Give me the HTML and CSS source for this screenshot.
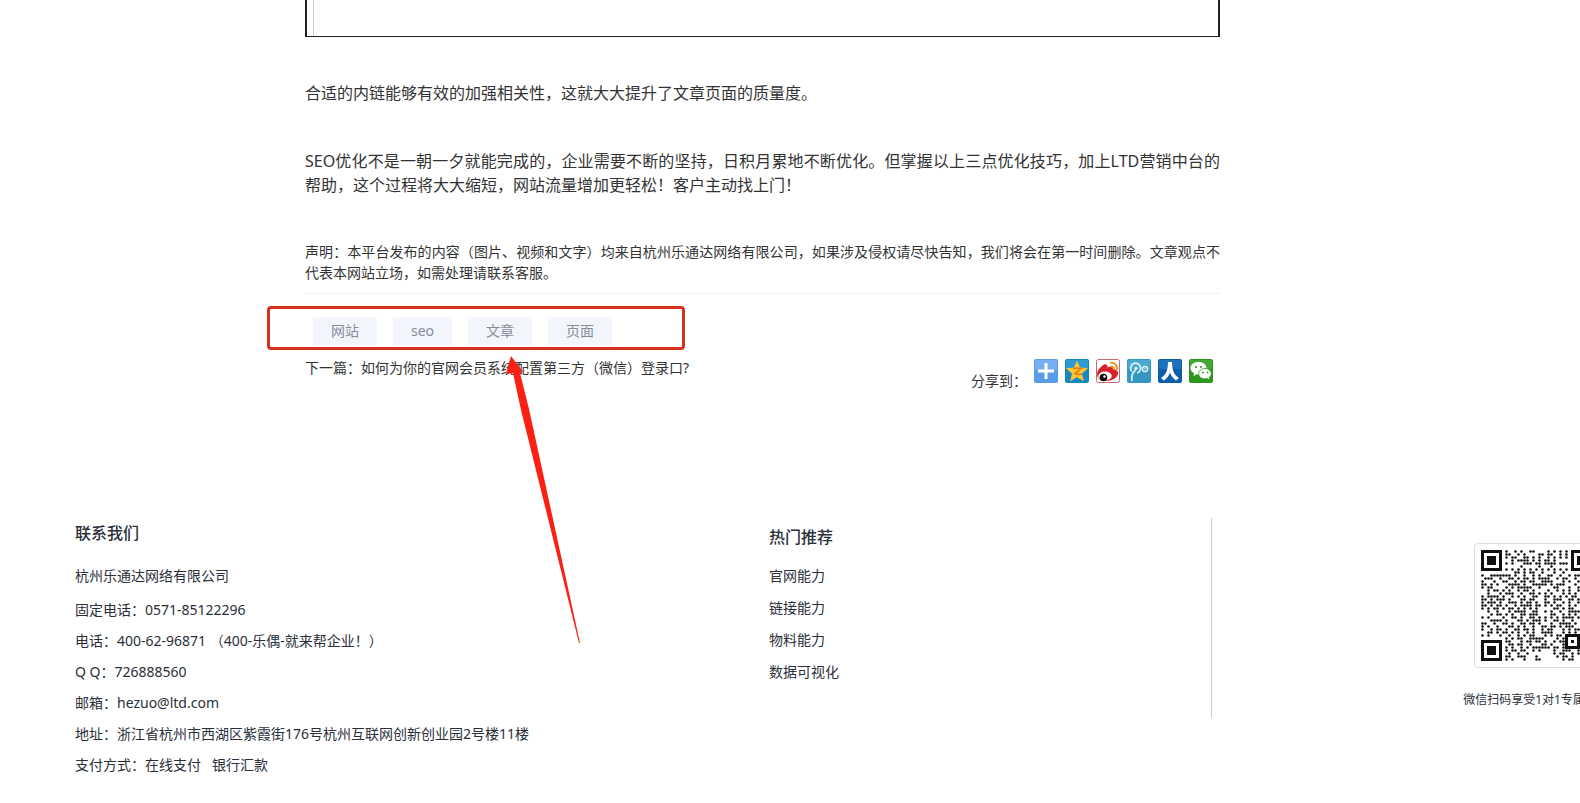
FILE: index.html
```
<!DOCTYPE html>
<html lang="zh-CN">
<head>
    <meta charset="utf-8">
    <title>文章详情</title>
    <link rel="stylesheet" href="styles.css">
</head>

<body>
    <main class="article">
        <div class="frame"></div>
        <p class="text">合适的内链能够有效的加强相关性，这就大大提升了文章页面的质量度。</p>
        <p class="text">SEO优化不是一朝一夕就能完成的，企业需要不断的坚持，日积月累地不断优化。但掌握以上三点优化技巧，加上LTD营销中台的帮助，这个过程将大大缩短，网站流量增加更轻松！客户主动找上门！</p>
        <p class="notice">声明：本平台发布的内容（图片、视频和文字）均来自杭州乐通达网络有限公司，如果涉及侵权请尽快告知，我们将会在第一时间删除。文章观点不代表本网站立场，如需处理请联系客服。</p>

        <div class="tags">
            <a href="#">网站</a>
            <a href="#">seo</a>
            <a href="#">文章</a>
            <a href="#">页面</a>
            <div class="mark"></div>
            <svg class="arrow" width="80" height="290" viewBox="0 0 80 290">
                <path d="M10 1L22 17L19 18L28 54L79 288L78 288L20 55L12 18L5 19Z" fill="#fb2014"/>
            </svg>
        </div>

        <div class="bottom">
            <div class="next">下一篇：<a href="#">如何为你的官网会员系统配置第三方（微信）登录口?</a></div>
            <div class="share">
                <span>分享到：</span>
                <a href="#" title="更多">
                    <svg viewBox="0 0 24 24"><rect width="24" height="24" rx="2" fill="#5a9be8"/><path d="M1 1h22v10H1z" fill="#77b0f2"/><path d="M10.500 4h3v6.500H20v3h-6.500V20h-3v-6.500H4v-3h6.500z" fill="#fff"/></svg>
                </a>
                <a href="#" title="QQ空间">
                    <svg viewBox="0 0 24 24"><rect width="24" height="24" rx="2" fill="#1787c4"/><path d="M1 1h22v9H1z" fill="#2d9bd3"/><path d="M12 1.500l3 7 8 .7-6 5.300 1.800 7.800-6.800-4.100-6.800 4.100L7 14.500 1 9.200l8-.7z" fill="#fdc62e"/><path d="M8 9.500q4-1 8 0l-6 5.300q3 .8 7 .2" fill="none" stroke="#e77817" stroke-width="1.600"/></svg>
                </a>
                <a href="#" title="新浪微博">
                    <svg viewBox="0 0 24 24"><rect x=".5" y=".5" width="23" height="23" rx="2" fill="#fff" stroke="#c9676b"/><path d="M1 15c0-3 2-6 5-8 2-2 4-2 5-1 1 .8.500 2.500.500 2.500 3-1.500 7-1.500 7 2 3 .5 4 2.500 3.500 4.500-1 4-6 7-12 7S1 19 1 15z" fill="#d81f2c"/><ellipse cx="9" cy="17" rx="6.800" ry="4.400" fill="#fff"/><circle cx="7.500" cy="18.500" r="3.800" fill="#111"/><circle cx="8.500" cy="17.500" r="1.200" fill="#fff"/><path d="M14 4c4-1 8 2.500 7 7M14.500 7.500c2-.5 3.500 1 3 3" fill="none" stroke="#f0982c" stroke-width="2"/></svg>
                </a>
                <a href="#" title="腾讯微博">
                    <svg viewBox="0 0 24 24"><rect width="24" height="24" rx="2" fill="#3696c2"/><path d="M1 1h22v9H1z" fill="#4aa8cf"/><path d="M5 22c-.8-4 .2-8 3.500-11M4.800 12.500A5 5 0 1 1 10 14" fill="none" stroke="#d9f1fb" stroke-width="1.700"/><circle cx="9" cy="9.500" r="1.700" fill="#d9f1fb"/><circle cx="18" cy="10" r="2.600" fill="none" stroke="#d9f1fb" stroke-width="1.500"/><circle cx="18" cy="10" r=".8" fill="#d9f1fb"/></svg>
                </a>
                <a href="#" title="人人网">
                    <svg viewBox="0 0 24 24"><rect width="24" height="24" rx="2" fill="#0c5ea8"/><path d="M1 1h22v9H1z" fill="#1e72bb"/><path d="M10 3h4c0 8 2 13 7 16l-3 2.500c-3-2-5-5-6-8-1 3-3 6-6 8L3 19c5-3 7-8 7-16z" fill="#fff"/></svg>
                </a>
                <a href="#" title="微信">
                    <svg viewBox="0 0 24 24"><rect width="24" height="24" rx="2" fill="#2e961f"/><path d="M1 1h22v9H1z" fill="#43a832"/><path d="M9.500 3c4.700 0 8 2.700 8 6.200s-3.300 6.200-8 6.200q-1 0-2-.2L4.500 17l.5-2.800C3 13 1.500 11.500 1.500 9.200 1.500 5.700 4.800 3 9.500 3z" fill="#fff"/><path d="M16 9.500c3.700 0 6.300 2.300 6.300 5.200 0 1.600-.9 3-2.200 3.900l.5 2.200-2.500-1.200q-1 .2-2.100.2c-3.700 0-6.300-2.200-6.300-5.100s2.600-5.200 6.300-5.200z" fill="#fff" stroke="#2e961f" stroke-width=".8"/><g fill="#2e961f"><circle cx="7" cy="8" r="1"/><circle cx="12" cy="8" r="1"/><circle cx="14" cy="13.500" r=".9"/><circle cx="18.500" cy="13.500" r=".9"/></g></svg>
                </a>
            </div>
        </div>
    </main>

    <footer class="footer">
        <section class="contact">
            <h3>联系我们</h3>
            <p class="company">杭州乐通达网络有限公司</p>
            <p>固定电话：0571-85122296</p>
            <p>电话：400-62-96871 （400-乐偶-就来帮企业！）</p>
            <p>Q Q：726888560</p>
            <p>邮箱：hezuo@ltd.com</p>
            <p>地址：浙江省杭州市西湖区紫霞街176号杭州互联网创新创业园2号楼11楼</p>
            <p>支付方式：在线支付 &nbsp; 银行汇款</p>
        </section>
        <section class="hot">
            <h3>热门推荐</h3>
            <ul>
                <li><a href="#">官网能力</a></li>
                <li><a href="#">链接能力</a></li>
                <li><a href="#">物料能力</a></li>
                <li><a href="#">数据可视化</a></li>
            </ul>
        </section>
        <figure class="qr">
            <div class="qr-box">
                <svg id="qr" width="111" height="111" viewBox="0 0 37 37"></svg>
            </div>
            <figcaption>微信扫码享受1对1专属服务</figcaption>
        </figure>
    </footer>

    <script src="qr.js"></script>
</body>

</html>
```
FILE: styles.css
```
* {
    box-sizing: border-box;
}

body {
    margin: 0;
    background: #fff;
    color: #333;
    font-family: "Noto Sans", "Noto Sans CJK SC", sans-serif;
    font-size: 14px;
    line-height: 21px;
    overflow-x: hidden;
    text-spacing-trim: space-all;
}

a {
    color: inherit;
    text-decoration: none;
}

p, h3, ul, figure {
    margin: 0;
    padding: 0;
}

.article {
    margin: 0 360px 0 305px;
}

.frame {
    height: 37px;
    border: solid #1c1f24;
    border-width: 0 2px 1px;
    padding-left: 6px;
}

.frame::before {
    content: "";
    display: block;
    height: 100%;
    border-left: 1px solid #ccc;
}

.text {
    margin-top: 44px;
    font-size: 16px;
    line-height: 24px;
    text-align: justify;
}

.notice {
    margin-top: 44px;
    padding-bottom: 10px;
    border-bottom: 1px solid #f0f0f0;
    text-align: justify;
}

.tags {
    position: relative;
    display: flex;
    gap: 16px;
    margin-top: 23px;
    padding-left: 8px;
}

.tags a {
    padding: 0 18px;
    background: #f2f5fc;
    color: #878c9b;
    line-height: 28px;
}

/* red box and arrow lie over the article */
.mark {
    position: absolute;
    top: -11px;
    left: -38px;
    width: 418px;
    height: 44px;
    border: 3px solid #d7301f;
    border-radius: 4px;
}

.arrow {
    position: absolute;
    top: 38px;
    left: 196px;
}

.bottom {
    display: flex;
    justify-content: space-between;
    margin-top: 12px;
}

.share {
    display: flex;
    gap: 7px;
    padding: 2px 7px 0 0;
}

.share span {
    padding-top: 11px;
}

.share svg {
    display: block;
    width: 24px;
    height: 24px;
}

.footer {
    display: grid;
    grid-template-columns: 694fr 443fr minmax(0, 368fr);
    margin-top: 127px;
    padding-left: 75px;
    color: #2a2f3a;
    align-items: start;
}

.footer h3 {
    font-size: 16px;
    font-weight: 500;
    line-height: 24px;
}

.contact {
    padding-top: 3px;
}

.contact p {
    line-height: 31px;
}

.contact .company {
    margin: 15px 0 3px;
}

.hot {
    height: 200px;
    padding-top: 7px;
    border-right: 1px solid #ccc;
}

.hot ul {
    margin-top: 11px;
    list-style: none;
    line-height: 32px;
}

.qr {
    display: flex;
    flex-direction: column;
    align-items: center;
    width: 148px;
    margin: 25px 0 0 250px;
}

.qr-box {
    width: 125px;
    height: 125px;
    padding: 6px;
    border: 1px solid #ddd;
    border-radius: 4px;
}

.qr svg {
    display: block;
}

.qr figcaption {
    margin-top: 21px;
    font-size: 12px;
    white-space: nowrap;
}
```
FILE: qr.js
```
var rows = [
    "........#..#.#..##....#.#.#.#........",
    "........##..#.#....##.##..#.#........",
    "........#.##..##.#.#..#.#.#.#........",
    "..........#.####.#.#.##.#............",
    "........#.#...###.##.####.###........",
    ".............#.....#...#.............",
    "........#.#.#.#.#.#.#.#.#.#.#........",
    "...........##.#.##..#...#..#.........",
    "#..#######.#..#..#.#..##..#..#.##.#..",
    ".###..#..##.#.##.#.####..#.##..#.##..",
    "#...#..##..#.##.##..####...#.#..#..#.",
    "##.#.#...####.#..#####.#.###...#.#...",
    "#.##....#.#.#####..#....##...#..##.#.",
    "..#.##.#.#..#.##.#....#..#.#.#..#.#..",
    "..#...#.###..#..##.#.#.#...#.#.#..#..",
    "#.####.#..#.#.#..##..##.#.#.#.##.#...",
    "##.#.###.#...##.##...#..###..##.##.#.",
    "#.###.#..###.#.##.#..##.#..#.#..##...",
    "##.#.##.#..#.####.##.#.#.##..#.#..##.",
    "#.#.##.#.##.#.#.#.#.....##.#.##..#...",
    "..#..#...#.####..##..#.#..#..####.#..",
    "...#.##.#.#..##.###....##..#.#.#..#..",
    "#.#....#..##.#..##.#.#.#.#.####.#.##.",
    "...####.#...##.#.###.#..##.#..#..##..",
    "##..#..##.#..##.##.#...#..####.#.#...",
    "#.#..#...##.#.#..#..##.##.#.###..###.",
    "#..#.##.#..##.##.#..#.##...#.#.##....",
    "..##.#.##.#.#..#.#..####...#.#.#..#..",
    "#.#...#..#..#.#.##...#.#.##.......#..",
    "........#.#.##..#####....#.#.....#.#.",
    "........##...#.##.##.#..#.##.....##..",
    ".........##.##..#...##.#...#.....#...",
    "........#.#..#.#.######.##.#......#..",
    "........#.##.##..#.#....#..###..##...",
    ".........#..#..#........#.##..#.#.#..",
    "........##..###...#......#.##.#..##..",
    "........#.#...#...##.......#.##..#..."
];

// small dots
var html = '';
for (var y = 0; y < rows.length; y++) {
    for (var x = 0; x < rows[y].length; x++) {
        if (rows[y][x] == '#') {
            html += '<circle cx="' + (x + 0.5) + '" cy="' + (y + 0.5) + '" r="0.43"/>';
        }
    }
}

// a square ring with a solid centre
function marca(x, y, size, dot) {
    var c = (size - dot) / 2;
    html += '<rect x="' + (x + 0.5) + '" y="' + (y + 0.5) + '" width="' + (size - 1) + '" height="' + (size - 1) + '" fill="none" stroke="#111"/>';
    html += '<rect x="' + (x + c) + '" y="' + (y + c) + '" width="' + dot + '" height="' + dot + '"/>';
}

marca(0, 0, 7, 3);
marca(30, 0, 7, 3);
marca(0, 30, 7, 3);
marca(28, 28, 5, 1);

document.getElementById('qr').innerHTML = '<g fill="#111">' + html + '</g>';
```
